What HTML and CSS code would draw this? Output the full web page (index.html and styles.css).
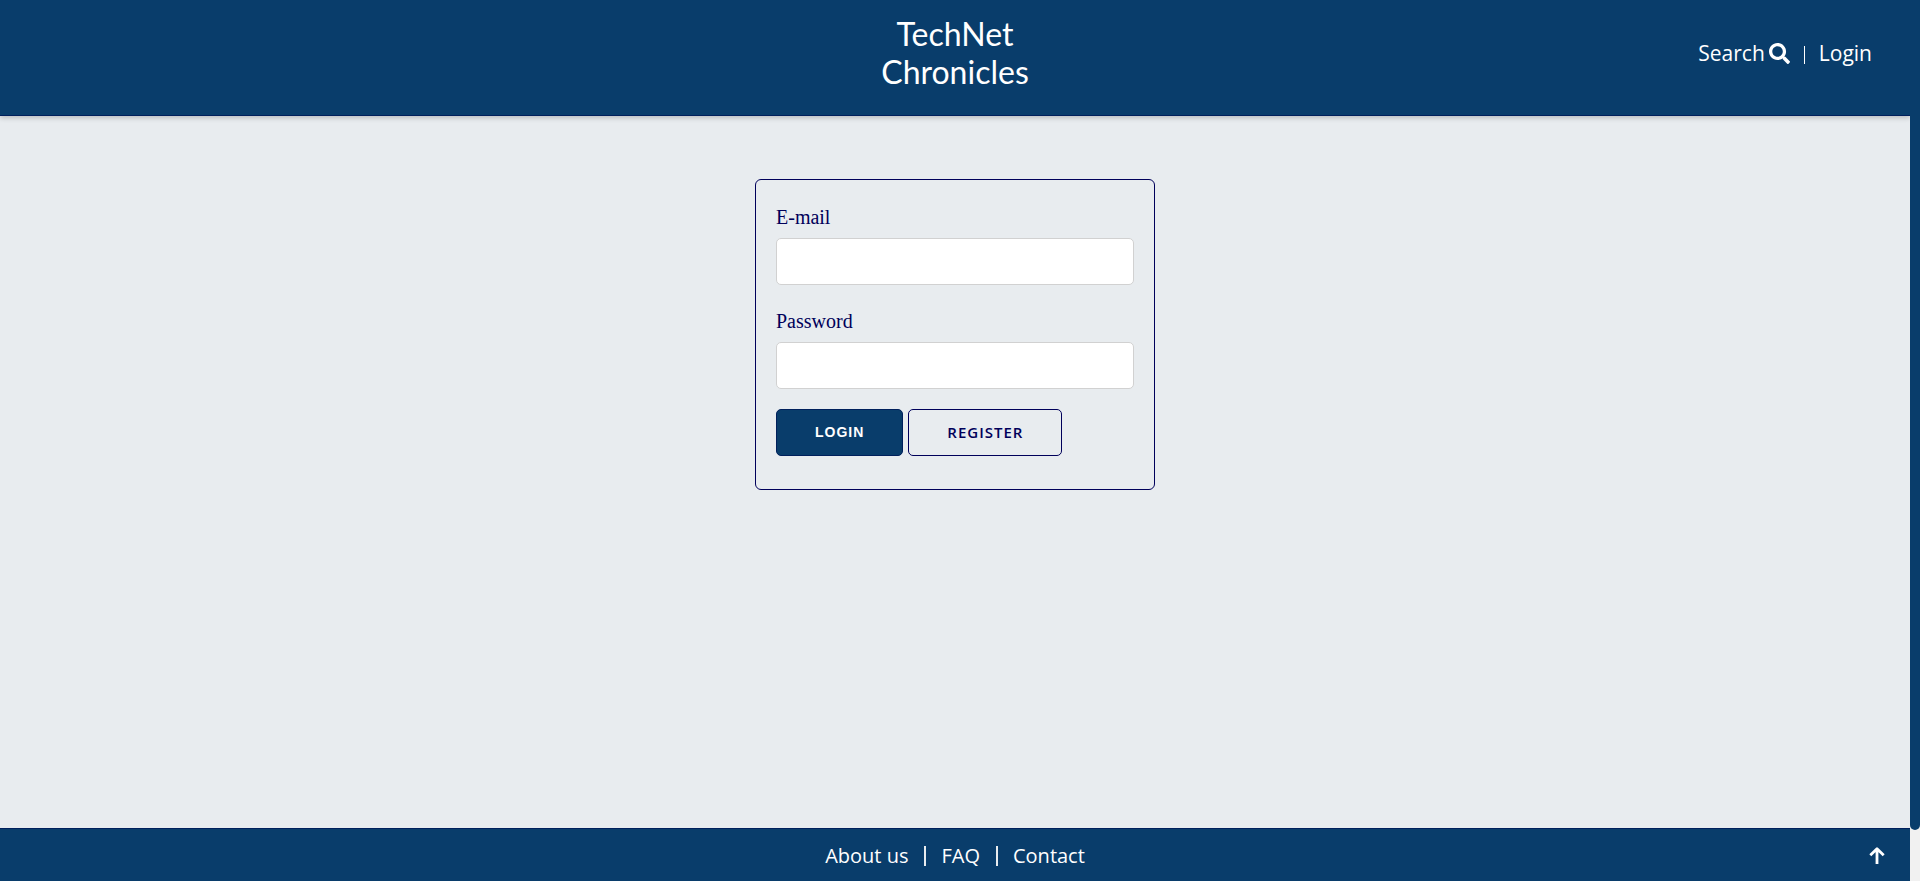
FILE: index.html
```html
<!DOCTYPE html>
<html lang="en">
<head>
<meta charset="utf-8">
<meta name="viewport" content="width=device-width, initial-scale=1">
<title>TechNet Chronicles</title>
<link rel="stylesheet" href="styles.css">
</head>
<body>
<div class="page">
  <header class="header">
    <a class="brand" href="#">TechNet<br>Chronicles</a>
    <nav class="nav">
      <a class="nav-link" href="#">Search<svg class="search-icon" viewBox="0 0 512 512" aria-hidden="true"><path fill="currentColor" d="M505 442.700L405.300 343c-4.500-4.500-10.600-7-17-7H372c27.600-35.300 44-79.700 44-128C416 93.100 322.900 0 208 0S0 93.100 0 208s93.100 208 208 208c48.300 0 92.700-16.400 128-44v16.300c0 6.400 2.500 12.500 7 17l99.700 99.700c9.400 9.400 24.600 9.400 33.900 0l28.300-28.300c9.400-9.400 9.400-24.600.1-34zM208 336c-70.700 0-128-57.200-128-128 0-70.700 57.200-128 128-128 70.700 0 128 57.200 128 128 0 70.700-57.200 128-128 128z"/></svg></a>
      <span class="nav-divider"></span>
      <a class="nav-link" href="#">Login</a>
    </nav>
  </header>
  <main class="main">
    <form class="card">
      <label class="label" for="email">E-mail</label>
      <input class="input" id="email" type="email">
      <label class="label" for="password">Password</label>
      <input class="input" id="password" type="password">
      <div class="actions">
        <button class="button button-primary" type="submit">LOGIN</button>
        <a class="button button-outline" href="#">REGISTER</a>
      </div>
    </form>
  </main>
  <footer class="footer">
    <nav class="footer-nav">
      <a class="footer-link" href="#">About us</a>
      <a class="footer-link" href="#">FAQ</a>
      <a class="footer-link" href="#">Contact</a>
    </nav>
    <a class="to-top" href="#" aria-label="Back to top"><svg class="arrow-icon" viewBox="0 0 16 18" aria-hidden="true"><path d="M8 17V2M1.300 8.300 8 1.800l6.700 6.500" fill="none" stroke="currentColor" stroke-width="2.800" stroke-linejoin="round"/></svg></a>
  </footer>
</div>
<div class="scroll-track" aria-hidden="true"><div class="scroll-thumb"></div></div>
</body>
</html>
```
FILE: styles.css
```css
:root {
  --blue: #093d6b;
  --navy: #00005a;
  --paper: #e8ecef;
  --sans: "Open Sans", "Noto Sans", sans-serif;
}

* {
  box-sizing: border-box;
}

body {
  margin: 0;
  display: flex;
  min-height: 100vh;
  background: var(--paper);
  font-family: var(--sans);
}

a {
  color: inherit;
  text-decoration: none;
}

.page {
  flex: 1;
  display: flex;
  flex-direction: column;
}

.header {
  display: grid;
  grid-template-columns: 1fr auto 1fr;
  align-items: start;
  padding: 15px 38px 24px;
  background: var(--blue);
  border-bottom: 1px solid #00205c;
  box-shadow: 0 2px 5px rgba(0, 0, 0, 0.2);
  color: #fff;
}

.brand {
  grid-column: 2;
  font-family: Lato, sans-serif;
  font-size: 32px;
  line-height: 38px;
  text-align: center;
}

.nav {
  display: flex;
  justify-content: flex-end;
  align-items: center;
  gap: 14px;
  padding-top: 22px;
  font-size: 21px;
  line-height: 32px;
}

.nav-link {
  display: flex;
  align-items: center;
  gap: 4px;
}

.search-icon {
  width: 21px;
  height: 21px;
}

.nav-divider {
  width: 1px;
  height: 18px;
  margin-top: 4px;
  background: #fff;
}

.main {
  flex: 1;
  padding: 63px 20px;
}

.card {
  max-width: 400px;
  margin: 0 auto;
  padding: 21px 20px 33px;
  border: 1px solid var(--navy);
  border-radius: 6px;
}

.label {
  display: block;
  margin-bottom: 5px;
  color: var(--navy);
  font-family: "Liberation Serif", serif;
  font-size: 20px;
  line-height: 32px;
}

.input {
  display: block;
  width: 100%;
  height: 47px;
  margin-bottom: 20px;
  padding: 6px 12px;
  border: 1px solid #d1d1d1;
  border-radius: 5px;
  background: #fff;
  font-size: 18px;
}

.actions {
  display: flex;
  gap: 5px;
}

.button {
  height: 47px;
  padding: 0 38px;
  border: 1px solid var(--navy);
  border-radius: 5px;
  font-size: 14px;
  font-weight: 600;
  letter-spacing: 1px;
  line-height: 45px;
}

.button-primary {
  border-color: #00205c;
  background: var(--blue);
  color: #fff;
  font-family: "Liberation Sans", sans-serif;
}

.button-outline {
  color: var(--navy);
  font-size: 15px;
}

.footer {
  display: grid;
  grid-template-columns: 1fr auto 1fr;
  align-items: center;
  padding: 11px 25px 9px;
  border-top: 1px solid #00205c;
  background: var(--blue);
  color: #fff;
}

.footer-nav {
  grid-column: 2;
  display: flex;
  align-items: center;
  font-size: 20px;
  line-height: 32px;
}

.footer-link {
  display: flex;
  align-items: center;
}

.footer-link + .footer-link::before {
  content: "";
  width: 2px;
  height: 20px;
  margin: 0 15px 0 16px;
  background: #e8ecef;
}

.to-top {
  justify-self: end;
  display: flex;
}

.arrow-icon {
  width: 16px;
  height: 18px;
}

.scroll-track {
  width: 10px;
  background: #f1f1f1;
}

.scroll-thumb {
  height: 94.2vh;
  border-radius: 0 0 5px 5px;
  background: var(--blue);
}
```
